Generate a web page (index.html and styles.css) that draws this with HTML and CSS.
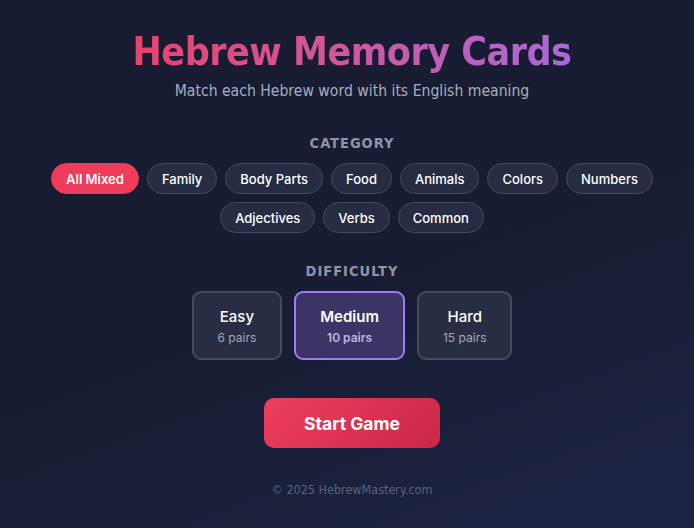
FILE: index.html
```html
<!DOCTYPE html>
<html lang="en">
<head>
  <meta charset="UTF-8"/>
  <meta name="viewport" content="width=device-width,initial-scale=1.0"/>
  <title>Hebrew Memory Cards</title>
  <link rel="stylesheet" href="styles.css">
</head>
<body>
  <main class="setup">
    <header class="setup-header">
      <h1>Hebrew Memory Cards</h1>
      <p class="subtitle">Match each Hebrew word with its English meaning</p>
    </header>

    <section class="group">
      <h2 class="group-label">Category</h2>
      <div class="pills">
        <button class="pill active">All Mixed</button>
        <button class="pill">Family</button>
        <button class="pill">Body Parts</button>
        <button class="pill">Food</button>
        <button class="pill">Animals</button>
        <button class="pill">Colors</button>
        <button class="pill">Numbers</button>
        <button class="pill">Adjectives</button>
        <button class="pill">Verbs</button>
        <button class="pill">Common</button>
      </div>
    </section>

    <section class="group">
      <h2 class="group-label">Difficulty</h2>
      <div class="levels">
        <button class="level">
          <span class="level-name">Easy</span>
          <span class="level-pairs">6 pairs</span>
        </button>
        <button class="level active">
          <span class="level-name">Medium</span>
          <span class="level-pairs">10 pairs</span>
        </button>
        <button class="level">
          <span class="level-name">Hard</span>
          <span class="level-pairs">15 pairs</span>
        </button>
      </div>
    </section>

    <button class="btn-start">Start Game</button>

    <footer class="footer">&copy; 2025 HebrewMastery.com</footer>
  </main>
</body>
</html>
```

FILE: styles.css
```css
/* ===== Global ===== */
* { margin: 0; padding: 0; box-sizing: border-box; }
html, body { height: 100%; }
body {
  font-family: 'DejaVu Sans Condensed', 'DejaVu Sans', sans-serif;
  background: linear-gradient(160deg, #181c32 0%, #181d34 55%, #1b2543 100%);
  color: #fff;
  padding-left: 10px;
  overflow: hidden;
}

.setup {
  max-width: 640px;
  margin: 0 auto;
  padding-top: 29px;
  display: flex;
  flex-direction: column;
  align-items: center;
  text-align: center;
}

/* ===== Header ===== */
.setup-header h1 {
  font-size: 39px;
  font-weight: 700;
  line-height: 46px;
  letter-spacing: -0.5px;
  background: linear-gradient(90deg, #e8436d 0%, #d0569a 45%, #a96ad6 100%);
  -webkit-background-clip: text;
  background-clip: text;
  color: transparent;
}
.subtitle {
  margin-top: 6px;
  font-size: 15.6px;
  line-height: 20px;
  color: #a7adbd;
}

/* ===== Option groups ===== */
.group { margin-top: 33px; width: 100%; }
.group + .group { margin-top: 29px; }
.group-label {
  font-size: 14.5px;
  line-height: 18px;
  font-weight: 700;
  letter-spacing: 1px;
  text-transform: uppercase;
  color: #8f95a6;
  margin-bottom: 11px;
}

.pills {
  display: flex;
  flex-wrap: wrap;
  justify-content: center;
  gap: 8px;
}
.pill {
  font-family: 'Inter', sans-serif;
  font-size: 13px;
  font-weight: 500;
  height: 31px;
  padding: 0 14px;
  border-radius: 16px;
  border: 1px solid #434a62;
  background: #262c42;
  color: #fff;
  cursor: pointer;
}
.pill.active {
  background: #ee3c5a;
  border-color: #ee3c5a;
  font-weight: 600;
}

.levels {
  display: flex;
  justify-content: center;
  gap: 12px;
}
.level {
  display: flex;
  flex-direction: column;
  align-items: center;
  justify-content: center;
  gap: 4px;
  height: 69px;
  padding: 0 24px;
  border-radius: 9px;
  border: 2px solid #454b60;
  background: #272d43;
  color: #fff;
  font-family: 'Inter', sans-serif;
  cursor: pointer;
}
.level-name { font-size: 15px; font-weight: 500; }
.level-pairs { font-size: 12px; color: #a3a8b8; }
.level.active {
  background: linear-gradient(135deg, #3d3466, #3a3566);
  border-color: #9f7cf0;
}
.level.active .level-name { font-weight: 600; }
.level.active .level-pairs { font-weight: 600; color: #bdb6dc; }

/* ===== Start ===== */
.btn-start {
  margin-top: 38px;
  width: 176px;
  height: 50px;
  border: none;
  border-radius: 10px;
  background: linear-gradient(135deg, #ee3f5d, #cb2647);
  color: #fff;
  font-family: 'Inter', sans-serif;
  font-size: 17.5px;
  font-weight: 700;
  cursor: pointer;
}

.footer {
  margin-top: 34px;
  font-size: 12.5px;
  color: #5c637c;
}
```
